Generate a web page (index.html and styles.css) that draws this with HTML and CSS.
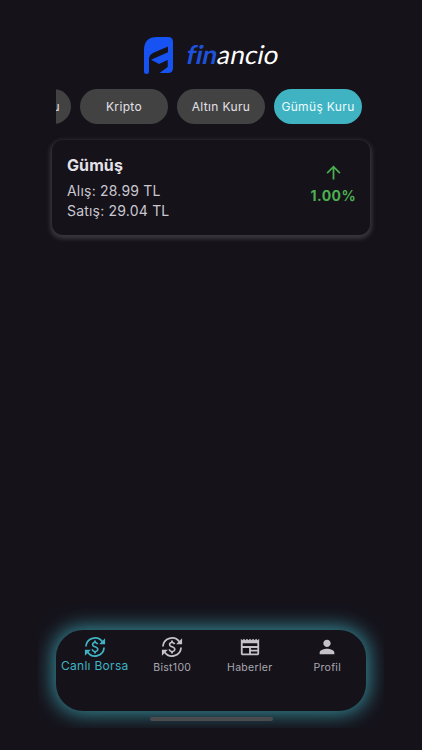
FILE: index.html
```html
<!DOCTYPE html>
<html lang="tr">
<head>
<meta charset="utf-8">
<title>financio</title>
<link rel="stylesheet" href="styles.css">
</head>
<body>
<svg class="defs" width="0" height="0" aria-hidden="true">
  <symbol id="exchange" viewBox="0 0 24 24">
    <path d="M12.89 11.1c-1.78-.59-2.64-.96-2.64-1.9 0-1.02 1.11-1.39 1.81-1.39 1.31 0 1.79.99 1.9 1.34l1.58-.67c-.15-.45-.82-1.92-2.54-2.24V5h-2v1.26c-2.48.56-2.49 2.86-2.49 2.96 0 2.27 2.25 2.91 3.35 3.31 1.58.56 2.28 1.07 2.28 2.03 0 1.13-1.05 1.61-1.98 1.61-1.82 0-2.34-1.87-2.4-2.09L8.1 14.75c.63 2.19 2.28 2.78 2.9 2.96V19h2v-1.24c.4-.09 2.9-.59 2.9-3.22 0-1.39-.61-2.61-3.01-3.44z"/>
    <path fill="none" stroke="currentColor" stroke-width="1.9" d="M2.100 11.400A9.900 9.900 0 0 1 20 6.200M21.900 12.600A9.900 9.900 0 0 1 4 17.800"/>
    <path d="M23 2.500V9h-6.500zM1 21.500V15h6.500z"/>
  </symbol>
</svg>
<div class="screen">
  <header class="brand">
    <svg class="mark" viewBox="0 0 29 37">
      <path fill="#1653f2" d="M0 34.500V13Q0 0 13 0H24Q29 0 29 5V31Q29 36 24 36H15.500L23.700 30V23L15 27 7 22.800 24 15.200V9.500L9 16Q5 18 5 22V34.500Q5 37 2.500 37Q0 37 0 34.500Z"/>
    </svg>
    <div class="wordmark"><b>fin</b>ancio</div>
  </header>
  <div class="chips">
    <div class="chip">Döviz Kuru</div>
    <div class="chip">Kripto</div>
    <div class="chip">Altın Kuru</div>
    <div class="chip active">Gümüş Kuru</div>
  </div>
  <section class="card">
    <div class="info">
      <h1>Gümüş</h1>
      <p>Alış: 28.99 TL</p>
      <p>Satış: 29.04 TL</p>
    </div>
    <div class="change">
      <svg viewBox="0 0 24 24"><path d="M4 12l1.410 1.410L11 7.830V20h2V7.830l5.580 5.590L20 12l-8-8-8 8z"/></svg>
      <span>1.00%</span>
    </div>
  </section>
  <div class="dock">
    <nav class="nav">
      <div class="tab selected"><svg><use href="#exchange"/></svg><span>Canlı Borsa</span></div>
      <div class="tab"><svg><use href="#exchange"/></svg><span>Bist100</span></div>
      <div class="tab"><svg viewBox="0 0 24 24"><path d="M22 3l-1.670 1.670L18.670 3 17 4.670 15.330 3l-1.660 1.670L12 3l-1.670 1.670L8.670 3 7 4.670 5.330 3 3.670 4.670 2 3v16c0 1.100.9 2 2 2h16c1.100 0 2-.9 2-2V3zM11 19H4v-6h7v6zm9 0h-7v-2h7v2zm0-4h-7v-2h7v2zm0-4H4V8h16v3z"/></svg><span>Haberler</span></div>
      <div class="tab"><svg viewBox="0 0 24 24"><path d="M12 12c2.210 0 4-1.790 4-4s-1.790-4-4-4-4 1.790-4 4 1.790 4 4 4zm0 2c-2.670 0-8 1.340-8 4v2h16v-2c0-2.660-5.330-4-8-4z"/></svg><span>Profil</span></div>
    </nav>
    <div class="home-bar"></div>
  </div>
</div>
</body>
</html>
```
FILE: styles.css
```css
* { box-sizing: border-box; margin: 0; padding: 0; }
body { background: #15121a; font-family: Inter, "Liberation Sans", sans-serif; color: #e4e1e8; }
.defs { display: block; }
svg { fill: currentColor; }
.screen { width: 422px; height: 750px; overflow: hidden; display: flex; flex-direction: column; }
.brand { height: 52px; margin-top: 37px; padding-left: 144px; display: flex; align-items: flex-start; }
.mark { width: 29px; height: 37px; }
.wordmark { margin-left: 14px; font: 400 26px/35px Lato, sans-serif; color: #fff; white-space: nowrap; letter-spacing: 0.1px; transform: skewX(-12deg); }
.wordmark b { font-weight: 700; color: #1f52dc; }
.chips { width: 310px; height: 35px; margin-left: 56px; display: flex; justify-content: flex-end; gap: 9px; padding-right: 4px; overflow: hidden; }
.chip { flex: none; width: 88px; height: 35px; border-radius: 18px; background: #424242; display: flex; align-items: center; justify-content: center; font-size: 12px; letter-spacing: 0.35px; white-space: nowrap; }
.chip:first-child { justify-content: flex-end; padding-right: 11px; }
.chip.active { background: #40b3c3; color: #eefcff; }
.card { width: 318px; height: 95px; margin: 16px 0 0 52px; padding: 14px 14px 0 15px; border-radius: 11px; background: #15121a; box-shadow: 0 2px 4px 2px #38363d; display: flex; justify-content: space-between; }
.info h1 { font-size: 16px; line-height: 22px; font-weight: 700; letter-spacing: 0.1px; margin-bottom: 5px; }
.info p { font-size: 14px; line-height: 20px; letter-spacing: 0.2px; color: #cac7cf; }
.change { display: flex; flex-direction: column; align-items: center; color: #4caf50; padding-top: 8px; }
.change svg { width: 21px; height: 21px; }
.change span { font-size: 14px; line-height: 20px; font-weight: 700; letter-spacing: 0.4px; margin-top: 3px; }
.dock { width: 346px; height: 140px; margin: 353px 0 0 38px; padding: 42px 18px 0; overflow: hidden; }
.nav { width: 310px; height: 81px; padding-top: 6px; border-radius: 27px; background: #15121a; box-shadow: 0 0 20px 3px rgba(64,179,195,.75); display: flex; }
.tab { width: 77.5px; display: flex; flex-direction: column; align-items: center; color: #c5c2c8; }
.tab svg { width: 22px; height: 22px; flex: none; }
.tab span { font-size: 10.5px; line-height: 16px; margin-top: 2px; letter-spacing: 0.3px; white-space: nowrap; color: #aaa8af; }
.tab.selected, .tab.selected span { color: #40b3c3; }
.tab.selected span { font-size: 12px; margin-top: 0; letter-spacing: 0.3px; }
.home-bar { width: 123px; height: 4px; margin: 6px 0 0 94px; border-radius: 2px; background: #4b4b4d; position: relative; }
```
